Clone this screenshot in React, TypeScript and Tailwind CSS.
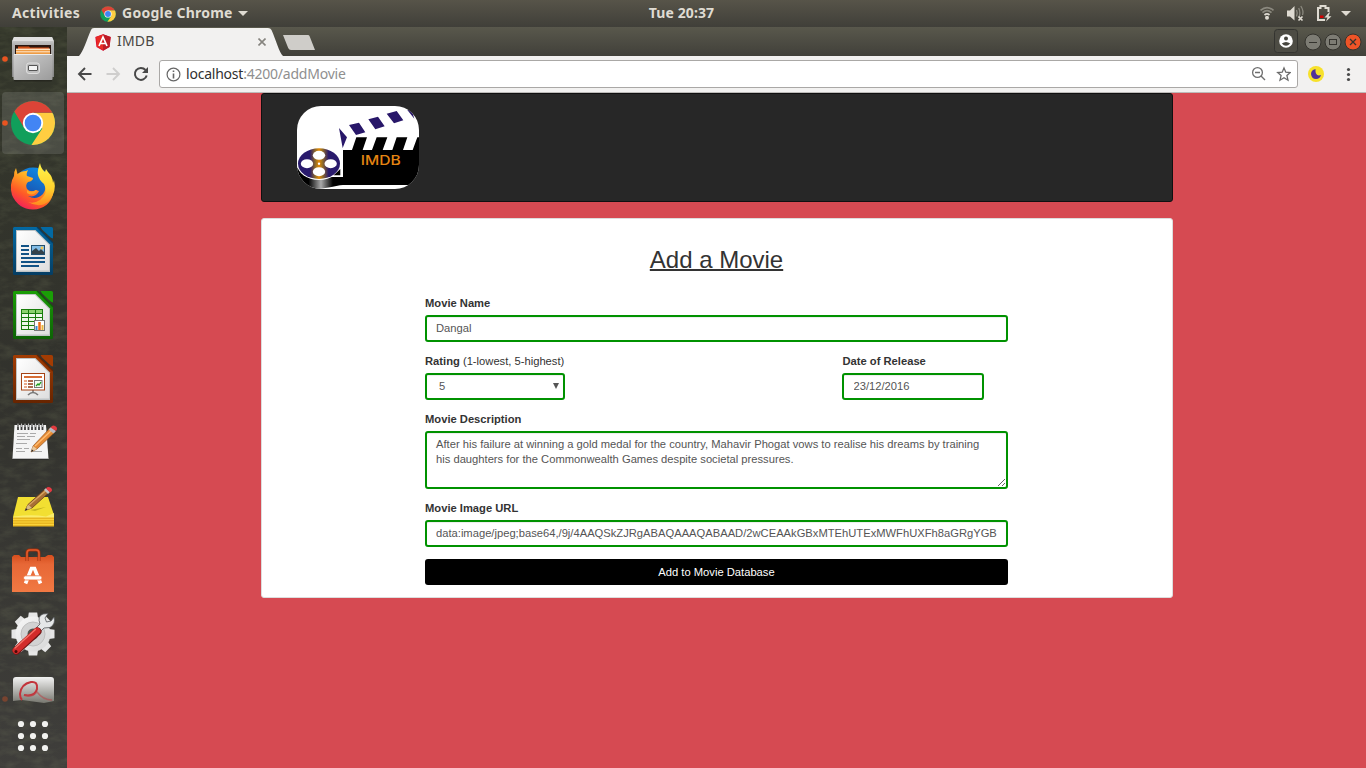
import React from "react";

function ChromeLogo({ id, className }: { id: string; className: string }) {
  return (
    <svg viewBox="0 0 46 46" className={className}>
      <defs>
        <clipPath id={id}>
          <circle cx="23" cy="23" r="22.5" />
        </clipPath>
      </defs>
      <g clipPath={`url(#${id})`}>
        <rect width="46" height="46" fill="#119f5b" />
        <path d="M23 12.5H46V46H21L32.5 28.5Z" fill="#ffcd41" />
        <path d="M0 0H46V12.5H23L14 28L2.5 9Z" fill="#dc4437" />
      </g>
      <circle cx="23" cy="23" r="10.4" fill="#fff" />
      <circle cx="23" cy="23" r="8.5" fill="#4285f4" />
    </svg>
  );
}

function Slot({ top, active, children }: { top: number; active?: boolean; children: React.ReactNode }) {
  return (
    <svg viewBox={`0 ${top} 67 64`} className="h-16 w-[67px] shrink-0 overflow-visible">
      {active && <rect x="2" y="92" width="62" height="62" rx="4" fill="#fff" fillOpacity=".12" />}
      {children}
    </svg>
  );
}

function FileManager() {
  return (
    <Slot top={28}>
      <defs>
        <linearGradient id="cab" x1="0" y1="0" x2="0" y2="1">
          <stop offset="0" stopColor="#dcdcdc" />
          <stop offset=".18" stopColor="#b4b4b4" />
          <stop offset="1" stopColor="#858585" />
        </linearGradient>
        <linearGradient id="drawer" x1="0" y1="0" x2="1" y2="1">
          <stop offset="0" stopColor="#cfcfcf" />
          <stop offset="1" stopColor="#9b9b9b" />
        </linearGradient>
      </defs>
      <circle cx="5" cy="59" r="2.8" fill="#e95420" />
      <rect x="14" y="79" width="38" height="2.5" rx="1" fill="#20201a" opacity=".7" />
      <path d="M14 37H52L54 41V77H12V41Z" fill="url(#cab)" />
      <path d="M14 37H52L53.5 41H12.5Z" fill="#e0e0e0" />
      <rect x="15" y="45" width="36" height="10" fill="#291710" />
      <path d="M18 46.5H29L30 47.5H49V50H18Z" fill="#cf4d14" />
      <rect x="16" y="48.6" width="34" height="1.4" fill="#ffe4c4" />
      <rect x="16" y="50" width="34" height="4" fill="#ee9c45" />
      <rect x="16" y="51.3" width="34" height="1" fill="#ffe9ce" />
      <rect x="13.5" y="54" width="39" height="26" rx="1" fill="url(#drawer)" />
      <path d="M14 54.5H52" stroke="#ececec" />
      <rect x="26.500" y="63" width="13" height="10.500" rx="2.5" fill="#bdbdbd" stroke="#dedede" />
      <rect x="28.5" y="65.500" width="9" height="5" rx=".5" fill="#f3f3f3" stroke="#555" />
    </Slot>
  );
}

function Firefox() {
  return (
    <Slot top={156}>
      <defs>
        <linearGradient id="fox" x1=".8" y1="0" x2=".2" y2="1">
          <stop offset="0" stopColor="#fff14a" />
          <stop offset=".35" stopColor="#ffad22" />
          <stop offset=".68" stopColor="#ff5a26" />
          <stop offset="1" stopColor="#ef1563" />
        </linearGradient>
        <linearGradient id="globe" x1=".8" y1="0" x2=".3" y2="1">
          <stop offset="0" stopColor="#0c8fe8" />
          <stop offset="1" stopColor="#213c9b" />
        </linearGradient>
        <linearGradient id="tail" x1="0" y1="0" x2="0" y2="1">
          <stop offset="0" stopColor="#fff54a" />
          <stop offset=".6" stopColor="#ffd12e" />
          <stop offset="1" stopColor="#ff8a1e" />
        </linearGradient>
      </defs>
      <circle cx="33" cy="187" r="19.5" fill="url(#globe)" />
      <path d="M16 168L17.5 174Q21 171 26 171L28 170Q26 174 27 176L33 178Q33 181 28 182Q25 185 27 189Q31 193 36 190L39 191Q36 198 28 196Q36 201 43 194Q47 189 44 182L48 176Q56 184 53 194Q49 209 33 209.500Q18 209 12 195Q9 184 14 176Q14 171 16 168Z" fill="url(#fox)" />
      <path d="M40 163Q37 171 38 175Q39 180 44 184Q49 193 40 200Q34 204 28 202Q40 209 49 201Q57 192 54 180L53 183Q53 177 48 172L46 169L45 172Q41 169 40 163Z" fill="url(#tail)" />
      <path d="M27 190Q31 193 36 190L37 191Q33 197 27 193Z" fill="#ffa126" />
    </Slot>
  );
}

function Doc({ top, color, dark, children }: { top: number; color: string; dark: string; children: React.ReactNode }) {
  return (
    <svg viewBox="0 0 67 64" className="h-16 w-[67px] shrink-0">
      <defs>
        <linearGradient id={`doc${top}`} x1="0" y1="0" x2="0" y2="1">
          <stop offset="0" stopColor={color} />
          <stop offset="1" stopColor={dark} />
        </linearGradient>
        <linearGradient id="paper" x1="0" y1="0" x2="1" y2="1">
          <stop offset="0" stopColor="#fff" />
          <stop offset="1" stopColor="#dedede" />
        </linearGradient>
      </defs>
      <path d="M14.500 7H37L53 23V53.500Q53 55 51.500 55H14.500Q13 55 13 53.500V8.500Q13 7 14.500 7Z" fill={`url(#doc${top})`} />
      <path d="M37 7L53 23" stroke={dark} strokeWidth="1.200" />
      <path d="M40.500 7H51.500Q53 7 53 8.500V18.500Q51 18 49 16L42 9.500Z" fill={color} />
      <path d="M16 10H35.500L50 24.500V52H16Z" fill="#bfc3c5" />
      <path d="M17 11H35L49 25V50.500H17Z" fill="url(#paper)" />
      {children}
    </svg>
  );
}

function Writer() {
  return (
    <Doc top={220} color="#0369a3" dark="#053d63">
      <path d="M21 26H29M21 30H29M21 34H29M21 38H45M21 42H45M21 46H39" stroke="#125386" strokeWidth="1.900" />
      <rect x="31.500" y="25.500" width="13" height="9" fill="#83bde7" stroke="#24506f" />
      <path d="M32 34V31L36 28L39 31L41 29L44 32V34Z" fill="#35434b" />
      <circle cx="42" cy="28" r="1.400" fill="#f6c64d" />
    </Doc>
  );
}

function Calc() {
  return (
    <Doc top={284} color="#1a9e06" dark="#0d6205">
      <rect x="21.500" y="25.500" width="21" height="20" fill="#edf8e9" stroke="#177c0b" />
      <rect x="22" y="26" width="20" height="3.500" fill="#8bd26e" />
      <path d="M21 29.500H43M21 33.500H43M21 37.500H43M21 41.500H43M28.500 25V46M35.500 25V46" stroke="#177c0b" />
      <rect x="34.500" y="36.500" width="10" height="10" fill="#fff" stroke="#777" />
      <path d="M36.500 42V46" stroke="#358ad0" strokeWidth="2" />
      <path d="M39.500 38V46" stroke="#ef6b16" strokeWidth="2.500" />
      <path d="M42.500 41V46" stroke="#e9b53d" strokeWidth="2" />
    </Doc>
  );
}

function Impress() {
  return (
    <Doc top={348} color="#a33c03" dark="#672400">
      <path d="M33 42V45M28 47Q33 42 38 47" fill="none" stroke="#777" strokeWidth="1.600" />
      <rect x="21.500" y="25.500" width="23" height="16.500" fill="#fff" stroke="#a44315" />
      <path d="M24 29H42" stroke="#d35e20" strokeWidth="1.800" />
      <path d="M24 33H27M24 36H27M24 39H27" stroke="#e29068" strokeWidth="1.600" />
      <path d="M28 33H33M28 36H33M28 39H33" stroke="#923b16" strokeWidth="1.600" />
      <rect x="34.500" y="32.500" width="7.500" height="7" fill="#f2fbef" stroke="#777" />
      <path d="M36 38L38 36L39 37L41 34" fill="none" stroke="#1c9a1a" strokeWidth="1.300" />
    </Doc>
  );
}

function TextEditor() {
  return (
    <Slot top={412}>
      <path d="M14.500 425H46L48.500 460H12.500Z" fill="#222" opacity=".5" />
      <path d="M14.500 425H46L48.500 458.500H12.500Z" fill="#f4f4f4" />
      <path d="M12.500 458.500H48.500" stroke="#b8b8b8" />
      <path d="M18 424V430M21.500 424V430M25 424V430M28.500 424V430M32 424V430M35.500 424V430M39 424V430M42.500 424V430" stroke="#3d3d3d" strokeWidth="1.800" />
      <path d="M18 423.600V427M21.500 423.600V427M25 423.600V427M28.500 423.600V427M32 423.600V427M35.500 423.600V427M39 423.600V427M42.500 423.600V427" stroke="#ccc" strokeWidth=".9" />
      <path d="M17 433.500H28M30 433.500H36M17 436.500H25M27 436.500H35M17 439.500H30M16 443.500H27M16 448.500H22M24 448.500H29M16 451.500H25M31 451.500H42" stroke="#a1a1a1" strokeWidth=".9" />
      <path d="M31 452L33 446L50 428L54.500 432.500L37 449Z" fill="#e58b35" stroke="#8b4a18" strokeWidth=".6" />
      <path d="M35 446L52 430" stroke="#ffbd72" strokeWidth="1.300" />
      <path d="M31 452L33 446L37 449Z" fill="#e8c89d" />
      <path d="M31 452L32 449.500L33.500 450.700Z" fill="#222" />
      <path d="M48.500 429.500L51 427L56 431L53.500 433.500Z" fill="#b9b9c2" />
      <path d="M50.500 427.500L52 426Q54 424.500 56.500 427Q58 429 56 431Z" fill="#e33b3f" />
    </Slot>
  );
}

function StickyNotes() {
  return (
    <Slot top={476}>
      <path d="M13 517H54V526.500H13Z" fill="#e8b621" />
      <path d="M13 519.500H54M13 522H54M13 524.500H54" stroke="#ffdc43" strokeWidth=".8" />
      <path d="M18 497H48L54 515L52 517H13Z" fill="#f2df32" />
      <path d="M14 516.500Q32 514 46 516.500L54 513V517.500H13Z" fill="#faec6b" />
      <path d="M30 510L46 507L35 511Z" fill="#a49615" opacity=".6" />
      <path d="M25 510.500L28 504.500L45 489L48.500 493L32 508Z" fill="#a96f35" stroke="#5b3518" strokeWidth=".7" />
      <path d="M29 505L46 490.500" stroke="#d8a561" strokeWidth="1.200" />
      <path d="M25 510.500L28 504.500L32 508Z" fill="#d7b980" />
      <path d="M25 510.500L26.200 508.200L27.700 509.500Z" fill="#222" />
      <path d="M44 490L46 488L50 492L48 494Z" fill="#c1c1c1" />
      <path d="M46 488.500Q48 486 51 488Q53.500 490.500 50 492.500Z" fill="#e53942" />
    </Slot>
  );
}

function SoftwareCenter() {
  return (
    <Slot top={540}>
      <defs>
        <linearGradient id="bag" x1="0" y1="0" x2="0" y2="1">
          <stop offset="0" stopColor="#d64e1d" />
          <stop offset=".25" stopColor="#e76736" />
          <stop offset="1" stopColor="#f17943" />
        </linearGradient>
      </defs>
      <path d="M12 557L14 555H19L21 557H45L48 555H52L54 557V592H12Z" fill="url(#bag)" />
      <path d="M27 561V553Q27 550 30 550H36Q39 550 39 553V561" fill="none" stroke="#9e2e0c" strokeWidth="3" />
      <path d="M27 561V553Q27 550 30 550H36Q39 550 39 553V561" fill="none" stroke="#e45b2b" strokeWidth="1.600" />
      <path d="M25.500 583.500L31.500 568.500H34.500L40.500 583.500" fill="none" stroke="#fff" strokeWidth="3.600" />
      <rect x="23.500" y="575.800" width="18.500" height="4.200" rx="2.100" fill="#fff" stroke="#ed723e" strokeWidth=".8" />
    </Slot>
  );
}

function Settings() {
  const teeth = [0, 45, 90, 135, 180, 225, 270, 315];
  return (
    <Slot top={604}>
      <defs>
        <linearGradient id="gear" x1="0" y1="0" x2="1" y2="1">
          <stop offset="0" stopColor="#f8f8f8" />
          <stop offset="1" stopColor="#d6d6d6" />
        </linearGradient>
      </defs>
      <g fill="#e6e6e6">
        {teeth.map((a) => (
          <path key={a} d="M28 618L28.800 612.500H37.200L38 618Z" transform={`rotate(${a} 33 634)`} />
        ))}
      </g>
      <circle cx="33" cy="634" r="17.500" fill="url(#gear)" />
      <circle cx="33" cy="634" r="12" fill="#d2d2d2" stroke="#bebebe" />
      <circle cx="33" cy="634" r="5.500" fill="#51534c" />
      <path d="M36 628L40 624Q37 616 43 614L48 613.500L45 618L46.500 622L51 621L54 617Q56 624 50 627.500L44 628L39 633Z" fill="#e5e7e8" stroke="#54575a" strokeWidth=".8" />
      <path d="M37.500 631.500L16.500 650.500" stroke="#731515" strokeWidth="8" strokeLinecap="round" />
      <path d="M37 631L16 650.500" stroke="#d22c2b" strokeWidth="6.800" strokeLinecap="round" />
      <path d="M35.500 629.500L15 648" stroke="#f4756a" strokeWidth="1.300" strokeLinecap="round" />
      <circle cx="16" cy="651.500" r="1.500" fill="#4a0808" />
    </Slot>
  );
}

function DocumentViewer() {
  return (
    <svg viewBox="0 668 67 36" className="h-9 w-[67px] shrink-0">
      <defs>
        <linearGradient id="viewer" x1="0" y1="0" x2="0" y2="1">
          <stop offset="0" stopColor="#f2f2f2" />
          <stop offset="1" stopColor="#77776f" />
        </linearGradient>
      </defs>
      <circle cx="5" cy="699" r="2.800" fill="#e95420" opacity=".35" />
      <path d="M13 701V680Q13 677 16 677H51Q54 677 54 680V701L44 703L22 700Z" fill="url(#viewer)" />
      <path d="M24 695Q35 697 37 689Q38 681 31 682Q21 684 20 694Q20 698 22 700" fill="none" stroke="#c3343b" strokeWidth="2" />
      <path d="M24 695Q32 698 37 692Q43 700 52 700" fill="none" stroke="#b54a4c" strokeWidth="1.500" opacity=".6" />
    </svg>
  );
}

function Dock() {
  return (
    <aside className="relative flex w-[67px] shrink-0 flex-col overflow-hidden bg-linear-to-b from-[#33362a] via-[#32322d] to-[#3f3e3b] pt-px">
      <svg className="absolute inset-0 h-full w-full opacity-10">
        <filter id="moss">
          <feTurbulence type="fractalNoise" baseFrequency=".06 .13" numOctaves="4" seed="8" />
          <feColorMatrix values="0 0 0 0 .45  0 0 0 0 .50  0 0 0 0 .25  2.4 0 0 0 -.95" />
        </filter>
        <rect width="100%" height="100%" filter="url(#moss)" />
      </svg>
      <div className="relative flex flex-col">
        <FileManager />
        <Slot top={92} active>
          <circle cx="5" cy="123" r="2.800" fill="#e95420" />
          <svg x="10.500" y="100.500" width="45" height="45">
            <ChromeLogo id="dockChrome" className="h-[45px] w-[45px]" />
          </svg>
        </Slot>
        <Firefox />
        <Writer />
        <Calc />
        <Impress />
        <TextEditor />
        <StickyNotes />
        <SoftwareCenter />
        <Settings />
        <DocumentViewer />
        <svg viewBox="0 704 67 64" className="h-16 w-[67px] shrink-0" fill="#f2f2f0">
          {[724, 736, 748].map((y) => [21, 33, 45].map((x) => <circle key={`${x}-${y}`} cx={x} cy={y} r="3.100" />))}
        </svg>
      </div>
    </aside>
  );
}

function SystemBar() {
  return (
    <header className="flex h-[27px] shrink-0 items-center bg-linear-to-b from-[#575449] to-[#403f39] font-['Noto_Sans',sans-serif] text-[14px] leading-[19px] font-bold text-[#dfdbd2]">
      <div className="flex flex-1 items-center pl-3">
        <span className="w-[88px] pb-0.5 tracking-[0.3px]">Activities</span>
        <ChromeLogo id="barChrome" className="size-4" />
        <span className="ml-1.5 w-[111px] pb-0.5 tracking-[0.25px] whitespace-nowrap">Google Chrome</span>
        <svg width="10" height="5" className="ml-[5px]"><path d="M0 0H10L5 5Z" fill="#dfdbd2" /></svg>
      </div>
      <span className="pb-0.5 tracking-[0.1px]">Tue 20:37</span>
      <div className="flex flex-1 items-center justify-end pr-[15px]">
        <svg viewBox="1256 3 96 21" className="-mr-[1px] h-[21px] w-24">
          <g fill="none" strokeWidth="1.700">
            <path d="M1260.500 10.300Q1267 4.800 1273.500 10.300" stroke="#8b897f" />
            <path d="M1262.500 12.700Q1267 8.700 1271.500 12.700" stroke="#8b897f" />
            <path d="M1264.500 15Q1267 12.800 1269.500 15" stroke="#dfdbd2" />
          </g>
          <circle cx="1267" cy="17.800" r="2" fill="#dfdbd2" />
          <path d="M1287 10.500H1290L1294.500 6V20.500L1290 16.500H1287Z" fill="#dfdbd2" />
          <path d="M1296.500 10Q1298 13 1296.500 16.500M1298.700 8Q1301 13 1298.700 18M1300.800 6Q1304 11 1302.500 15" stroke="#8b897f" fill="none" strokeWidth="1.300" />
          <path d="M1298.500 16.500L1302.500 20.500M1302.500 16.500L1298.500 20.500" stroke="#dfdbd2" strokeWidth="1.700" />
          <path d="M1325 20H1318V8H1320.500V6H1325.500V8H1328.500V12" fill="none" stroke="#dfdbd2" strokeWidth="2" />
          <rect x="1320" y="15.500" width="3.500" height="2.500" fill="#d40000" />
          <path d="M1329 12.500L1324.500 17.500H1327.500L1326 21.500L1331.500 16.300H1328.500L1330 12.500Z" fill="#dfdbd2" />
          <path d="M1341 11H1351L1346 16Z" fill="#dfdbd2" />
        </svg>
      </div>
    </header>
  );
}

function TabStrip() {
  return (
    <div className="flex h-[29px] shrink-0 items-end justify-between bg-linear-to-b from-[#59584c] to-[#41403a] pl-3">
      <div className="relative flex h-7 w-[204px] items-center pl-4">
        <svg viewBox="0 0 204 28" className="absolute inset-0 h-7 w-[204px]">
          <path d="M0 28C4 24 8 11 12 2Q12.500 0 15 0H189Q191.500 0 192.500 2C197 12 200 24 204 28Z" fill="#f2f1f0" />
        </svg>
        <svg viewBox="0 0 16 17" className="relative h-[17px] w-4">
          <path d="M8 .3L15.700 3L14.500 13L8 16.700L1.500 13L.3 3Z" fill="#dd0031" />
          <path d="M8 .3L15.700 3L14.500 13L8 16.700Z" fill="#bd1b25" />
          <path d="M1 3L8 .5V16L2 12.700Z" fill="#e72b25" />
          <path d="M4 12L8 3L12 12M5.600 9.500H10.400" fill="none" stroke="#fff" strokeWidth="1.700" />
        </svg>
        <span className="relative ml-[6px] flex-1 pb-0.5 font-['Noto_Sans',sans-serif] text-[14px] leading-5 tracking-[0.2px] text-[#4a4743]">IMDB</span>
        <svg viewBox="0 0 8 8" className="relative mr-[17px] size-2">
          <path d="M.5.500L7.500 7.500M7.500.500L.5 7.500" stroke="#86847f" strokeWidth="1.600" />
        </svg>
        <svg viewBox="0 0 32 15" className="absolute top-[7px] left-[204px] h-[15px] w-8">
          <path d="M0 0H25Q26 0 26.500 1L32 15H8Q6 15 5.200 13Z" fill="#cfcdc9" />
        </svg>
      </div>
      <svg viewBox="1270 27 96 29" className="h-[29px] w-24">
        <rect x="1274.500" y="29.500" width="23" height="23" rx="3" fill="#4d4c44" stroke="#343430" />
        <circle cx="1286" cy="41" r="6.800" fill="#fff" />
        <circle cx="1286" cy="38.500" r="2" fill="#46453e" />
        <path d="M1281.800 43.500Q1286 40.500 1290.200 43.500Q1286 48 1281.800 43.500Z" fill="#46453e" />
        <g stroke="#34332e">
          <circle cx="1313" cy="42" r="8" fill="#7d7c74" />
          <circle cx="1333" cy="42" r="8" fill="#7d7c74" />
          <circle cx="1353" cy="42" r="8" fill="#ee5427" />
          <path d="M1309 42.500H1317" />
          <rect x="1329.500" y="39.500" width="7" height="5" fill="none" />
          <path d="M1350 39L1356 45M1356 39L1350 45" strokeWidth="1.300" />
        </g>
      </svg>
    </div>
  );
}

function Toolbar() {
  return (
    <div className="flex h-[37px] shrink-0 items-center border-b border-[#bdbbb9] bg-[#f2f1f0]">
      <svg viewBox="67 56 92 36" className="h-9 w-[92px]">
        <path d="M91.500 74H79.500M85 68L79 74L85 80" fill="none" stroke="#484848" strokeWidth="1.900" />
        <path d="M106.500 74H118.500M113 68L119 74L113 80" fill="none" stroke="#cfcecd" strokeWidth="1.900" />
        <path d="M145.500 70A6 6 0 1 0 146.700 75.500" fill="none" stroke="#484848" strokeWidth="2" />
        <path d="M148 67V73H142Z" fill="#484848" />
      </svg>
      <div className="flex h-7 w-[1139px] items-center rounded-[3px] border border-[#aaa8a6] bg-white px-1.5">
        <svg viewBox="0 0 15 15" className="size-[15px]">
          <circle cx="7.500" cy="7.500" r="6.400" fill="none" stroke="#666" strokeWidth="1.200" />
          <path d="M7.500 6.500V11.500M7.500 3.500V5" stroke="#666" strokeWidth="1.600" />
        </svg>
        <div className="ml-[5px] flex-1 font-['Noto_Sans',sans-serif] text-[14px] leading-5 tracking-[-0.22px] text-[#8f8f8f]">
          <span className="text-[#303030]">localhost</span>:4200/addMovie
        </div>
        <svg viewBox="1249.5 66 42 16" className="h-4 w-[42px]">
          <circle cx="1258" cy="72.500" r="4.900" fill="none" stroke="#6e6e6e" strokeWidth="1.300" />
          <path d="M1255.500 72.500H1260.500M1261.500 76L1265.500 80" stroke="#6e6e6e" strokeWidth="1.400" />
          <path d="M1284.500 68L1286.300 72.200L1290.800 72.600L1287.400 75.600L1288.500 80.200L1284.500 77.800L1280.500 80.200L1281.600 75.600L1278.200 72.600L1282.700 72.200Z" fill="none" stroke="#6a6a6a" strokeWidth="1.300" />
        </svg>
      </div>
      <svg viewBox="1298 56 68 36" className="h-9 w-[68px]">
        <circle cx="1316" cy="74" r="8" fill="#f7e12b" />
        <path d="M1315.500 69Q1311 70 1311 74Q1311.500 79 1316 79Q1320 79 1321 75Q1315 77 1315.500 69Z" fill="#51309a" />
        <g fill="#4a4a4a">
          <circle cx="1348.500" cy="69.500" r="1.600" />
          <circle cx="1348.500" cy="74.500" r="1.600" />
          <circle cx="1348.500" cy="79.500" r="1.600" />
        </g>
      </svg>
    </div>
  );
}

function MovieLogo() {
  return (
    <svg viewBox="126 54 366 249" className="h-[83px] w-[122px]">
      <defs>
        <clipPath id="logoShape"><rect x="126" y="54" width="366" height="249" rx="72" /></clipPath>
        <linearGradient id="reel" x1="0" x2="1">
          <stop offset="0" stopColor="#291a6c" />
          <stop offset=".28" stopColor="#291a6c" />
          <stop offset=".42" stopColor="#977025" />
          <stop offset=".5" stopColor="#e58a06" />
          <stop offset=".58" stopColor="#977025" />
          <stop offset=".73" stopColor="#291a6c" />
          <stop offset="1" stopColor="#291a6c" />
        </linearGradient>
        <linearGradient id="strip" x1="0" x2="1">
          <stop offset=".25" stopColor="#000" />
          <stop offset=".52" stopColor="#aaa" />
          <stop offset=".78" stopColor="#000" />
        </linearGradient>
      </defs>
      <g clipPath="url(#logoShape)">
        <rect x="126" y="54" width="366" height="249" fill="#fff" />
        <path d="M252 120L276 148L263 180Z M282 111L312 104L331 133L303 141Z M340 94L369 86L389 115L361 124Z M395 77L425 69L445 97L417 106Z M457 66L470 66L478 92Z" fill="#281769" />
        <path d="M264 186H291L304 148H336L323 186H351L365 148H397L383 186H412L425 148H457L444 186H473L487 148H492V291H264Z" fill="#000" />
        <path d="M126 240V303H193Q225 299 255 292L264 291V267H225Z" fill="url(#strip)" />
        <ellipse cx="192" cy="227" rx="66" ry="49" fill="#fff" />
        <path d="M237 264H261V190" fill="none" stroke="#fff" strokeWidth="3" />
        <path d="M236 262L256 243V262Z" fill="#000" />
        <ellipse cx="192" cy="227" rx="63" ry="46" fill="url(#reel)" />
        <g fill="#fff">
          <ellipse cx="192" cy="202" rx="18.500" ry="13.500" />
          <ellipse cx="192" cy="251" rx="18.500" ry="13.500" />
          <ellipse cx="156" cy="227" rx="18.500" ry="13.500" />
          <ellipse cx="227" cy="227" rx="18.500" ry="13.500" />
          <circle cx="192" cy="227" r="3.500" />
        </g>
        <text x="317" y="231" fontSize="40" textLength="120" lengthAdjust="spacingAndGlyphs" fill="#e58512" fontFamily="Inter, sans-serif" fontWeight="500">IMDB</text>
      </g>
    </svg>
  );
}

const label = "block text-[11.2px] leading-[15px] font-bold text-[#333]";
const field =
  "block w-full rounded-[3px] border-2 border-[#009200] bg-white px-[9px] text-[11.2px] leading-[15px] text-[#555] outline-none shadow-[inset_0_1px_1px_rgba(0,0,0,0.075)]";

function MovieForm() {
  return (
    <form className="mx-auto w-[583px]" onSubmit={(e) => e.preventDefault()}>
      <label className={label} htmlFor="name">Movie Name</label>
      <input id="name" defaultValue="Dangal" className={`${field} mt-1 h-[27px] pb-0.5`} />
      <div className="mt-3 flex justify-between pr-6">
        <div className="w-[140px]">
          <label className={`${label} whitespace-nowrap`} htmlFor="rating">
            Rating <span className="font-normal">(1-lowest, 5-highest)</span>
          </label>
          <div className="relative mt-1">
            <select id="rating" defaultValue="5" className={`${field} h-[27px] appearance-none pl-3`}>
              {[1, 2, 3, 4, 5].map((n) => <option key={n}>{n}</option>)}
            </select>
            <svg viewBox="0 0 6 6" className="absolute top-[10px] right-[6px] size-1.5"><path d="M0 0H6L3 6Z" fill="#555" /></svg>
          </div>
        </div>
        <div className="w-[142px]">
          <label className={`${label} pl-[0.5px]`} htmlFor="date">Date of Release</label>
          <input id="date" defaultValue="23/12/2016" className={`${field} mt-1 h-[27px] pb-0.5 pl-[9.5px]`} />
        </div>
      </div>
      <label className={`${label} mt-3`} htmlFor="description">Movie Description</label>
      <textarea
        id="description"
        className={`${field} mt-1 h-[58px] resize py-1 pr-6`}
        defaultValue="After his failure at winning a gold medal for the country, Mahavir Phogat vows to realise his dreams by training his daughters for the Commonwealth Games despite societal pressures."
      />
      <label className={`${label} mt-3`} htmlFor="image">Movie Image URL</label>
      <input
        id="image"
        defaultValue="data:image/jpeg;base64,/9j/4AAQSkZJRgABAQAAAQABAAD/2wCEAAkGBxMTEhUTExMWFhUXFh8aGRgYGB"
        className={`${field} mt-1 h-[27px] pb-0.5`}
      />
      <button className="mt-3 block h-[26px] w-full rounded-[3px] bg-black text-[11.2px] text-white">Add to Movie Database</button>
    </form>
  );
}

export default function App() {
  return (
    <div className="flex h-screen w-screen flex-col overflow-hidden">
      <SystemBar />
      <div className="flex min-h-0 flex-1">
        <Dock />
        <div className="flex min-w-0 flex-1 flex-col">
          <TabStrip />
          <Toolbar />
          <main className="flex-1 bg-[#d64a52] pl-[194px] font-['Liberation_Sans',Arial,sans-serif]">
            <div className="w-[912px]">
              <nav className="h-[109px] rounded-[3px] border border-[#101010] bg-[#272727] pt-3 pl-[35px]">
                <MovieLogo />
              </nav>
              <section className="mt-4 h-[380px] rounded-[3px] border border-[#ddd] bg-white pt-[27px] pr-px">
                <h1 className="mb-[22px] text-center text-[24px] leading-[28px] text-[#333] underline decoration-2">Add a Movie</h1>
                <MovieForm />
              </section>
            </div>
          </main>
        </div>
      </div>
    </div>
  );
}
